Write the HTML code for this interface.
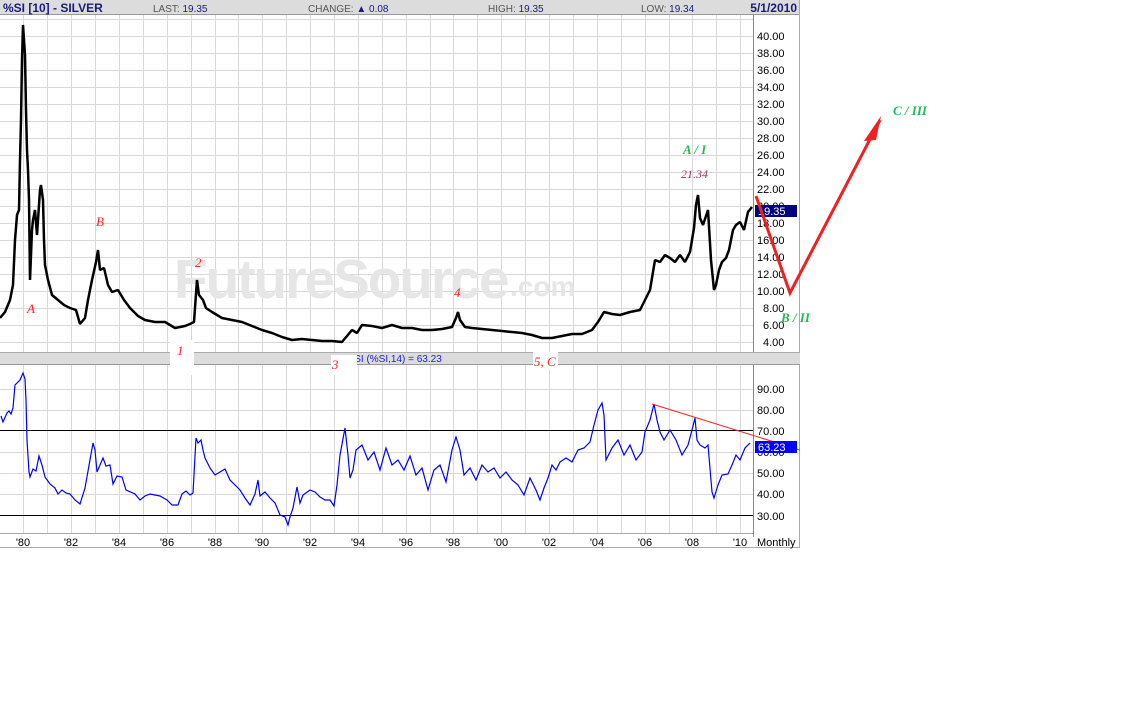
<!DOCTYPE html>
<html><head><meta charset="utf-8"><style>
body{margin:0;background:#fff;width:1133px;height:727px;overflow:hidden;font-family:"Liberation Sans",Arial,sans-serif}
svg{position:absolute;left:0;top:0}
</style></head><body>
<svg width="1133" height="727" viewBox="0 0 1133 727" xmlns="http://www.w3.org/2000/svg" font-family="Liberation Sans, Arial, sans-serif">
<rect x="0" y="0" width="800" height="15" fill="#dcdcdc"/>
<line x1="0" y1="14.5" x2="800" y2="14.5" stroke="#999"/>
<text x="3" y="12" font-size="12" font-weight="bold" fill="#1a1a80">%SI [10] - SILVER</text>
<text x="153" y="12" font-size="10" fill="#555">LAST: <tspan fill="#1a1a80">19.35</tspan></text>
<text x="308" y="12" font-size="10" fill="#555">CHANGE: <tspan fill="#1a1a80">▲ 0.08</tspan></text>
<text x="488" y="12" font-size="10" fill="#555">HIGH: <tspan fill="#1a1a80">19.35</tspan></text>
<text x="641" y="12" font-size="10" fill="#555">LOW: <tspan fill="#1a1a80">19.34</tspan></text>
<text x="797" y="12" font-size="12" font-weight="bold" fill="#1a1a80" text-anchor="end">5/1/2010</text>
<g stroke="#d8d8d8" stroke-width="1">
<path d="M0 19.5H753M0 36.5H753M0 53.5H753M0 70.5H753M0 87.5H753M0 104.5H753M0 121.5H753M0 138.5H753M0 155.5H753M0 172.5H753M0 189.5H753M0 206.5H753M0 223.5H753M0 240.5H753M0 257.5H753M0 274.5H753M0 291.5H753M0 308.5H753M0 325.5H753M0 342.5H753"/>
<path d="M0 389.5H753M0 410.5H753M0 452.5H753M0 473.5H753M0 494.5H753"/>
<path d="M23.5 15V352M47.5 15V352M71.5 15V352M95.5 15V352M119.5 15V352M143.5 15V352M167.5 15V352M191.5 15V352M215.5 15V352M238.5 15V352M262.5 15V352M286.5 15V352M310.5 15V352M334.5 15V352M358.5 15V352M382.5 15V352M406.5 15V352M430.5 15V352M453.5 15V352M477.5 15V352M501.5 15V352M525.5 15V352M549.5 15V352M573.5 15V352M597.5 15V352M621.5 15V352M645.5 15V352M669.5 15V352M692.5 15V352M716.5 15V352M740.5 15V352"/>
<path d="M23.5 365V533M47.5 365V533M71.5 365V533M95.5 365V533M119.5 365V533M143.5 365V533M167.5 365V533M191.5 365V533M215.5 365V533M238.5 365V533M262.5 365V533M286.5 365V533M310.5 365V533M334.5 365V533M358.5 365V533M382.5 365V533M406.5 365V533M430.5 365V533M453.5 365V533M477.5 365V533M501.5 365V533M525.5 365V533M549.5 365V533M573.5 365V533M597.5 365V533M621.5 365V533M645.5 365V533M669.5 365V533M692.5 365V533M716.5 365V533M740.5 365V533"/>
</g>
<text x="174" y="298" font-size="55" font-weight="bold" fill="#e6e6e6" letter-spacing="-2">FutureSource</text>
<text x="510" y="296" font-size="28" font-weight="bold" fill="#e6e6e6">.com</text>
<line x1="753.5" y1="15" x2="753.5" y2="352" stroke="#888"/>
<line x1="753.5" y1="365" x2="753.5" y2="537" stroke="#888"/>
<line x1="799.5" y1="0" x2="799.5" y2="548" stroke="#aaa"/>
<line x1="0" y1="533.5" x2="753" y2="533.5" stroke="#aaa"/>
<line x1="0" y1="547.5" x2="800" y2="547.5" stroke="#aaa"/>
<rect x="0" y="352" width="800" height="13" fill="#dcdcdc"/>
<line x1="0" y1="352.5" x2="800" y2="352.5" stroke="#aaa"/>
<line x1="0" y1="364.5" x2="800" y2="364.5" stroke="#999"/>
<g font-size="11" fill="#000">
<text x="757" y="40">40.00</text><text x="757" y="57">38.00</text><text x="757" y="74">36.00</text><text x="757" y="91">34.00</text><text x="757" y="108">32.00</text><text x="757" y="125">30.00</text><text x="757" y="142">28.00</text><text x="757" y="159">26.00</text><text x="757" y="176">24.00</text><text x="757" y="193">22.00</text><text x="757" y="210">20.00</text><text x="757" y="227">18.00</text><text x="757" y="244">16.00</text><text x="757" y="261">14.00</text><text x="757" y="278">12.00</text><text x="757" y="295">10.00</text><text x="763" y="312">8.00</text><text x="763" y="329">6.00</text><text x="763" y="346">4.00</text>
<text x="757" y="393">90.00</text><text x="757" y="414">80.00</text><text x="757" y="435">70.00</text><text x="757" y="456">60.00</text><text x="757" y="477">50.00</text><text x="757" y="498">40.00</text><text x="757" y="520">30.00</text>
<text x="757" y="546">Monthly</text>
<g text-anchor="middle"><text x="23" y="546">'80</text><text x="71" y="546">'82</text><text x="119" y="546">'84</text><text x="167" y="546">'86</text><text x="215" y="546">'88</text><text x="262" y="546">'90</text><text x="310" y="546">'92</text><text x="358" y="546">'94</text><text x="406" y="546">'96</text><text x="453" y="546">'98</text><text x="501" y="546">'00</text><text x="549" y="546">'02</text><text x="597" y="546">'04</text><text x="645" y="546">'06</text><text x="692" y="546">'08</text><text x="740" y="546">'10</text></g>
</g>
<rect x="755" y="205" width="42" height="12" fill="#000080"/>
<text x="758" y="215" font-size="11" fill="#fff">19.35</text>
<text x="347" y="362" font-size="10" fill="#2020e0">RSI (%SI,14) = 63.23</text>
<line x1="0" y1="430.5" x2="753" y2="430.5" stroke="#000"/>
<line x1="0" y1="515.5" x2="753" y2="515.5" stroke="#000"/>
<polyline fill="none" stroke="#000" stroke-width="2.5" stroke-linejoin="bevel" points="0,318 5,312 10,300 13,285 15,240 17,215 19,210 20,160 21,120 22,60 23,25 24,40 25,55 26,110 27,150 28,170 29,200 30,280 31,255 32,230 33,220 35,210 37,235 39,205 40,190 41,185 43,200 44,240 45,265 48,280 52,295 58,300 64,305 70,308 76,310 80,324 85,318 88,300 92,280 96,262 98,250 100,270 104,268 108,285 112,292 118,290 124,300 130,308 138,316 145,320 155,322 165,322 175,328 185,326 190,324 194,322 197,280 199,295 203,300 206,308 212,312 222,318 232,320 242,322 252,326 262,330 272,333 282,337 292,340 302,339 312,340 322,341 332,341 342,342 347,336 352,330 357,333 362,325 372,326 382,328 392,325 402,328 412,328 422,330 432,330 442,329 452,327 456,318 458,312 460,320 465,327 472,328 482,329 492,330 502,331 512,332 522,333 532,335 542,338 552,338 562,336 572,334 582,334 592,330 598,322 604,312 612,314 620,315 630,312 640,310 645,300 650,290 655,260 660,262 665,255 670,258 675,262 680,255 685,262 690,252 694,228 696,205 698,195 700,218 703,225 708,210 711,260 714,290 716,285 719,270 722,262 726,258 729,250 733,230 736,225 740,222 744,230 748,212 752,207"/>
<polyline fill="none" stroke="#0000ff" stroke-width="1.2" points="1,416 3,422 7,413 9,411 11,414 13,408 15,385 20,380 23,373 25,379 26,400 27,440 29,472 30,477 33,469 36,471 39,456 42,465 45,477 50,484 55,488 58,494 62,490 66,493 70,494 75,500 80,504 85,488 93,443 95,450 97,472 103,458 106,466 110,465 113,484 117,476 122,477 126,490 135,494 140,500 145,496 150,494 160,496 167,500 172,505 178,505 182,494 186,491 190,495 193,493 196,438 198,443 201,440 203,450 205,458 210,468 215,475 220,472 225,469 230,480 235,485 240,490 245,498 250,505 255,494 258,480 260,496 265,492 270,498 275,503 280,515 285,517 288,525 290,517 293,508 297,487 300,503 303,495 310,490 315,492 320,497 325,500 330,500 334,506 337,485 340,455 345,428 348,455 350,478 353,470 356,450 362,445 368,460 374,452 380,470 386,448 392,465 398,460 404,470 410,456 416,475 422,468 428,490 434,470 440,465 446,482 452,450 456,437 460,450 464,475 470,468 476,480 482,465 488,472 494,468 500,478 506,472 512,480 518,485 524,495 530,478 536,490 540,500 544,488 548,478 552,465 556,470 560,462 566,458 572,462 578,450 584,448 590,442 594,425 598,410 602,403 604,415 606,460 612,448 618,440 624,455 630,445 636,460 642,452 645,432 650,420 654,404 657,420 660,432 664,440 670,430 676,440 682,455 688,445 692,430 695,418 697,440 700,445 705,448 708,445 712,492 714,498 718,485 722,475 728,474 732,465 736,455 740,460 745,448 750,443"/>
<line x1="652" y1="404" x2="800" y2="450" stroke="#ff2020" stroke-width="1"/>
<rect x="755" y="441" width="42" height="12" fill="#0000ff"/>
<text x="758" y="451" font-size="11" fill="#fff">63.23</text>
<rect x="170" y="340" width="24" height="35" fill="#fff"/>
<rect x="331" y="355" width="26" height="20" fill="#fff"/>
<rect x="533" y="352" width="25" height="18" fill="#fff"/>
<g font-family="Liberation Serif, serif" font-style="italic" font-size="13" fill="#ff2020">
<text x="27" y="313">A</text><text x="96" y="226">B</text><text x="195" y="267">2</text><text x="177" y="355">1</text><text x="332" y="369">3</text><text x="454" y="297">4</text><text x="534" y="366">5, C</text>
</g>
<g font-family="Liberation Serif, serif" font-style="italic" font-weight="bold" font-size="13" fill="#22bb55">
<text x="683" y="154">A / I</text><text x="781" y="322">B / II</text><text x="893" y="115">C / III</text>
</g>
<text x="681" y="178" font-family="Liberation Serif, serif" font-style="italic" font-size="12" fill="#993366">21.34</text>
<polyline fill="none" stroke="#ee2020" stroke-width="3" points="756,196 790,293 880,120"/>
<polygon points="881,116 864,141 876,140" fill="#ee2020"/>
</svg>
</body></html>
